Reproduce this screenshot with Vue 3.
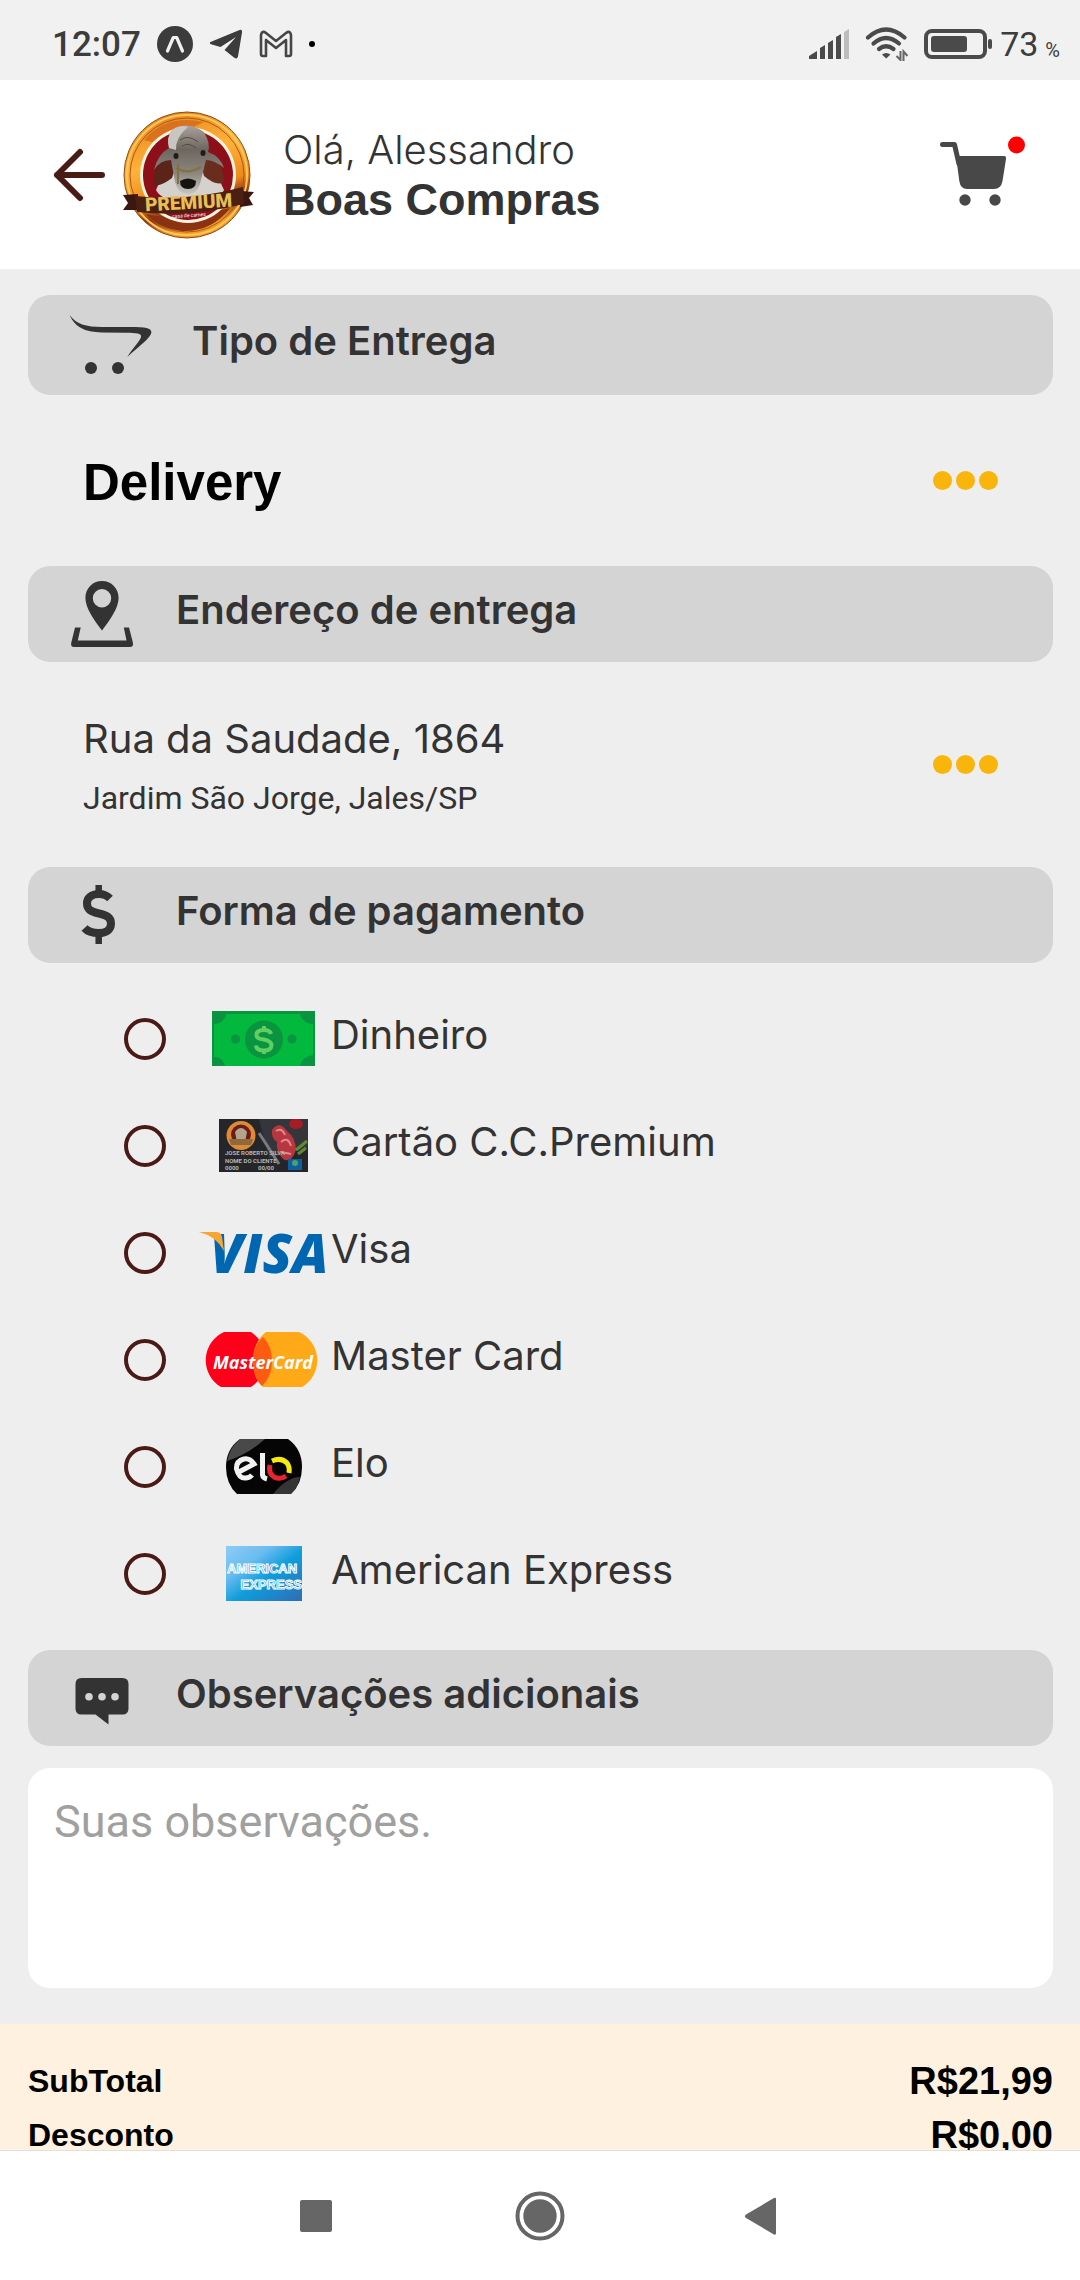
<script setup>
import { ref } from 'vue'

const payment = ref('')
const notes = ref('')

const methods = [
  { id: 'cash', label: 'Dinheiro' },
  { id: 'premium', label: 'Cartão C.C.Premium' },
  { id: 'visa', label: 'Visa' },
  { id: 'master', label: 'Master Card' },
  { id: 'elo', label: 'Elo' },
  { id: 'amex', label: 'American Express' }
]

const totals = [
  { label: 'SubTotal', value: 'R$21,99' },
  { label: 'Desconto', value: 'R$0,00' }
]
</script>

<template>
  <div class="screen">
    <div class="status">
      <div class="status-side">
        <span class="clock">12:07</span>
        <svg width="36" height="36" viewBox="0 0 36 36">
          <circle cx="18" cy="18" r="18" fill="#3c3c3c" />
          <path d="M10.500 25 L16.300 11.500 H19.700 L25.500 25" fill="none" stroke="#f1f1f1" stroke-width="3.200" stroke-linejoin="round" stroke-linecap="round" />
          <path d="M18 15.500 L22.500 26 L18 22 L13.500 26 Z" fill="#3c3c3c" />
        </svg>
        <svg width="34" height="30" viewBox="0 0 34 30">
          <path d="M1.500 13 L30.500 1 Q33.500 0 33 3.500 L29 27.500 Q28 31 25 28.500 L15.500 21 L27 8 L11.500 18 L2 15.200 Q0 14 1.500 13 Z" fill="#3c3c3c" />
        </svg>
        <svg width="34" height="28" viewBox="0 0 34 28">
          <path d="M2 24 V5 Q3 0 7 3 L17 11 L27 3 Q31 0 32 5 V24 Q32 26 30 26 H27 V10 L17 18 L7 10 V26 H4 Q2 26 2 24 Z" fill="none" stroke="#464646" stroke-width="2.600" stroke-linejoin="round" />
        </svg>
        <i class="more-dot"></i>
      </div>
      <div class="status-side status-right">
        <svg width="41" height="30" viewBox="0 0 41 30" fill="#4a4a4a">
          <path d="M0 30 V27 L8 22 V30 Z" />
          <path d="M11 30 V19 L16 16 V30 Z" />
          <path d="M19 30 V14 L24 11 V30 Z" />
          <path d="M27 30 V8 L32 5 V30 Z" />
          <path d="M35 30 V3 L40 0 V30 Z" fill="#bcbcbc" />
        </svg>
        <svg width="44" height="34" viewBox="0 0 44 34">
          <g fill="none" stroke="#4a4a4a" stroke-width="4.200" stroke-linecap="round">
            <path d="M3 10.500 Q21 -5.500 39.500 10.500" />
            <path d="M8.500 16.500 Q21 5.500 34 16.500" />
            <path d="M14 22 Q21 16.500 28.500 22" />
          </g>
          <path d="M17 27.500 Q21 24.500 25.500 27.500 L21.200 31.500 Z" fill="#4a4a4a" />
          <path d="M35.500 24 V33 L31.500 29 M38.500 34 V24.500 L42.500 29" fill="none" stroke="#666" stroke-width="2" />
        </svg>
        <svg width="69" height="32" viewBox="0 0 69 32">
          <rect x="2" y="3" width="59" height="26" rx="6" fill="none" stroke="#4a4a4a" stroke-width="4" />
          <rect x="7" y="8" width="36" height="16" rx="3" fill="#4a4a4a" />
          <rect x="64" y="11" width="4" height="10" rx="2" fill="#4a4a4a" />
        </svg>
        <span class="battery">73</span>
        <span class="percent">%</span>
      </div>
    </div>

    <header class="header">
      <button class="plain" type="button" aria-label="Voltar">
        <svg width="52" height="54" viewBox="0 0 52 54">
          <path d="M4 27 H49 M27 4 L4 27 L27 50" fill="none" stroke="#4a1a17" stroke-width="6" stroke-linecap="round" stroke-linejoin="round" />
        </svg>
      </button>
      <svg class="brand" width="132" height="130" viewBox="0 0 132 130">
        <defs>
          <linearGradient id="ring" x1="0" y1="0" x2="0.300" y2="1">
            <stop offset="0" stop-color="#8a3a10" />
            <stop offset="0.120" stop-color="#e88a22" />
            <stop offset="0.450" stop-color="#ffb23a" />
            <stop offset="0.720" stop-color="#ee8a1e" />
            <stop offset="0.850" stop-color="#8c3410" />
            <stop offset="1" stop-color="#f39a25" />
          </linearGradient>
          <linearGradient id="hide" x1="0" y1="0" x2="0" y2="1">
            <stop offset="0" stop-color="#a8a29c" />
            <stop offset="0.350" stop-color="#6e6760" />
            <stop offset="0.700" stop-color="#8d867e" />
            <stop offset="1" stop-color="#c9c6c2" />
          </linearGradient>
        </defs>
        <circle cx="65" cy="65" r="63" fill="url(#ring)" stroke="#8f4a14" stroke-width="1" />
        <circle cx="65" cy="65" r="60" fill="none" stroke="#ffc65a" stroke-width="2" />
        <circle cx="65" cy="65" r="57" fill="none" stroke="#a85a18" stroke-width="1" />
        <path d="M22 30 Q44 4 82 12 Q58 24 30 32 Z" fill="#d4681c" opacity="0.800" />
        <path d="M24 104 Q54 112 108 98 Q90 122 60 121 Q36 118 24 104 Z" fill="#8a3212" />
        <circle cx="66" cy="65" r="48" fill="#fff3dc" />
        <circle cx="66" cy="65" r="45" fill="#8d0f19" />
        <path d="M34 80 Q40 64 52 58 L82 58 Q96 64 102 80 Q98 92 66 92 Q40 92 34 80 Z" fill="#d5d2ce" />
        <path d="M50 40 Q32 50 31 74 Q37 78 50 68 L56 50 Z" fill="#5c2418" />
        <path d="M84 40 Q102 52 102 72 Q95 77 82 66 L78 50 Z" fill="#6a2c1c" />
        <path d="M50 20 Q66 10 82 22 Q89 34 86 42 Q98 46 102 58 Q92 50 84 50 L79 70 Q76 84 66 84 Q56 84 53 72 L49 50 Q38 50 32 60 Q36 44 47 38 Q44 28 50 20 Z" fill="url(#hide)" />
        <path d="M50 20 Q58 14 66 17 Q53 28 54 40 L47 38 Q44 28 50 20 Z" fill="#c9c5c0" />
        <path d="M58 30 Q66 24 76 32 M60 36 Q67 32 74 38" stroke="#534c46" fill="none" />
        <ellipse cx="54" cy="46" rx="2.500" ry="3" fill="#211b18" />
        <ellipse cx="81" cy="43" rx="2.500" ry="3" fill="#211b18" />
        <path d="M54 58 Q66 65 79 57 M56 54 L56 74" fill="none" stroke="#807246" stroke-width="2.200" />
        <path d="M58 71 Q66 66 74 71 Q74 79 66 79 Q58 79 58 71 Z" fill="#16120f" />
        <path d="M1 85 L16 84 L16 100 L1 100 L6 93 Z" fill="#3a1710" />
        <path d="M119 81 L132 82 L127 88 L131 95 L118 97 Z" fill="#3a1710" />
        <path d="M13 86 Q66 92 121 77 L122 94 Q66 108 15 102 Z" fill="#4b1f12" />
        <text class="brand-name" x="67" y="99" text-anchor="middle" transform="rotate(-3 67 99)">PREMIUM</text>
        <text class="brand-sub" x="67" y="107" text-anchor="middle" transform="rotate(-4 67 107)">casa de carnes</text>
      </svg>
      <div class="greeting">
        <span class="hello">Olá, Alessandro</span>
        <strong class="wish">Boas Compras</strong>
      </div>
      <button class="plain" type="button" aria-label="Carrinho">
        <svg width="88" height="82" viewBox="0 0 88 82">
          <path d="M4.500 10.500 H16.500 L21 30" fill="none" stroke="#484848" stroke-width="5" stroke-linecap="round" stroke-linejoin="round" />
          <path d="M18 22 H66 Q68.500 22 68 25 L64.500 47 Q63 55 56 55 H29 Q22.500 55 21.300 47 Z" fill="#484848" />
          <circle cx="27" cy="66" r="5.700" fill="#484848" />
          <circle cx="57" cy="66" r="5.700" fill="#484848" />
          <circle cx="78.500" cy="11" r="8.500" fill="#f00" />
        </svg>
      </button>
    </header>

    <main class="content">
      <h2 class="bar bar-tall">
        <svg width="84" height="62" viewBox="0 0 84 62" fill="#333">
          <path d="M1.600 1 C8 10 18 13 34 13 L62 13 C78 13 83 14 83.400 18 C83 24 70 33 59.300 43 C64 35 72 27 73 23 C74 19 68 19 58 18.700 L34 18.500 C16 18 7 13 1.600 1 Z" />
          <circle cx="23" cy="54" r="6" />
          <circle cx="50" cy="54" r="6" />
        </svg>
        <span class="bar-title">Tipo de Entrega</span>
      </h2>

      <section class="choice choice-type">
        <span class="delivery">Delivery</span>
        <button class="plain dots" type="button" aria-label="Alterar tipo de entrega"><i></i><i></i><i></i></button>
      </section>

      <h2 class="bar">
        <svg width="68" height="68" viewBox="0 0 68 68" fill="#333">
          <path fill-rule="evenodd" d="M34 1 C43.500 1 50.600 8.500 50.600 18 C50.600 28 42 40 34 50.500 C26 40 17.400 28 17.400 18 C17.400 8.500 24.500 1 34 1 Z M34 9 A9.200 9.200 0 1 0 34 27.400 A9.200 9.200 0 1 0 34 9 Z" />
          <path d="M7 47.500 H12.700 L9.800 60.500 H58.500 L55.800 47.500 H61 L65 63 Q65.500 67 62 67 H6 Q2.500 67 3.200 63 Z" />
        </svg>
        <span class="bar-title">Endereço de entrega</span>
      </h2>

      <section class="choice choice-address">
        <div class="address">
          <span class="street">Rua da Saudade, 1864</span>
          <span class="district">Jardim São Jorge, Jales/SP</span>
        </div>
        <button class="plain dots" type="button" aria-label="Alterar endereço"><i></i><i></i><i></i></button>
      </section>

      <h2 class="bar">
        <svg width="68" height="60" viewBox="0 0 68 60">
          <path d="M42 13.500 C39 10.500 35 9 31 9 C23.500 9 19 13 19 18.500 C19 25 24 27 31 28.500 C38 30 43 32 43 38.500 C43 45 38 48 31 48 C25 48 20 47 16.500 43" fill="none" stroke="#333" stroke-width="8" />
          <path d="M30.700 0 V7 M30.700 51 V59" stroke="#333" stroke-width="6.500" />
        </svg>
        <span class="bar-title">Forma de pagamento</span>
      </h2>

      <div class="methods">
        <label v-for="m in methods" :key="m.id" class="method">
          <input v-model="payment" type="radio" name="payment" :value="m.id" />
          <svg width="130" height="55" viewBox="0 0 130 55">
            <g v-if="m.id === 'cash'">
              <rect x="13" width="103" height="55" fill="#0a9440" />
              <path d="M15 3 H114 V55 H15 Z" fill="#02b83d" />
              <path d="M15 3 H27 Q26 12 15 13 Z M114 3 H101 Q103 12 114 13 Z M15 55 V46 Q24 46 26 55 Z M114 55 V44 Q103 46 101 55 Z" fill="#0a9440" />
              <circle cx="65" cy="28.500" r="19" fill="#0a9440" />
              <circle cx="36.500" cy="28" r="4.500" fill="#0a9440" />
              <circle cx="93" cy="28" r="4.500" fill="#0a9440" />
              <path d="M72 23 Q71 19 65 19 Q57.500 19 57.500 24 Q57.500 28 65 28.500 Q72.500 30 72.500 34.500 Q72 39.500 65 39.500 Q57.500 39.500 57 34.500 M65 15 V19 M65 39 V43" fill="none" stroke="#5fcf62" stroke-width="4" />
            </g>
            <g v-else-if="m.id === 'premium'">
              <rect x="20" y="1" width="89" height="53" fill="#25262a" />
              <path d="M60 1 H109 V30 L70 40 Z" fill="#34363c" />
              <circle cx="42" cy="17.500" r="14.500" fill="#e08a35" />
              <circle cx="42" cy="16.500" r="10" fill="#6b1c1a" />
              <path d="M36 14 Q42 6 48 14 L46 24 H38 Z" fill="#b3a48c" />
              <path d="M30 21 H54 L52 27 H32 Z" fill="#8c6a3c" />
              <ellipse cx="97" cy="6" rx="7" ry="5" fill="#a81d25" />
              <path d="M73 12 Q80 2 88 13 Q97 20 97 32 Q92 46 84 41 Q77 34 78 24 Q72 20 73 12 Z" fill="#b7363f" />
              <path d="M77 13 Q83 9 86 17 M82 24 Q89 18 92 28 M82 34 L92 36" fill="none" stroke="#e08a8c" stroke-width="2" />
              <path d="M60 15 L80 46" stroke="#777a80" stroke-width="3" />
              <path d="M97 32 L108 23 M99 36 L107 30" stroke="#5c8b35" stroke-width="3" />
              <text class="card-line" x="26" y="37">JOSE ROBERTO SILVA</text>
              <text class="card-line" x="26" y="45">NOME DO CLIENTE</text>
              <text class="card-line" x="26" y="52">0000</text>
              <text class="card-line" x="59" y="52">00/00</text>
              <rect x="89" y="41" width="14" height="11" fill="#0d5f9e" />
              <circle cx="96" cy="45" r="3" fill="#4aa36a" />
            </g>
            <g v-else-if="m.id === 'visa'">
              <text class="visa" x="11" y="48">VISA</text>
              <path d="M0 7 H17 Q22 7 23 12 L25 26 Q17 11 0 7 Z" fill="#f9a533" />
            </g>
            <g v-else-if="m.id === 'master'">
              <path d="M30 0 H52 A33 33 0 0 1 52 55 H22 A31 31 0 0 1 25 0 Z" fill="#fe0019" />
              <path d="M67 0 H100 A31 31 0 0 1 103 55 H64 Q54 46 54 29 Q54 10 67 0 Z" fill="#ffa919" />
              <path d="M64 5 Q73 14 73 29 Q73 45 63 54 Q54 46 54 29 Q54 14 64 5 Z" fill="#fd5a12" />
              <text class="master" x="64" y="37" text-anchor="middle">MasterCard</text>
            </g>
            <g v-else-if="m.id === 'elo'">
              <path d="M41 0 H89 Q103 10 103 28 Q103 45 92 55 H38 Q27 45 27 28 Q27 10 41 0 Z" fill="#050505" />
              <path d="M41 0 H66 Q48 16 28 22 Q31 8 41 0 Z" fill="#777" opacity="0.600" />
              <path d="M74 55 Q88 38 101 38 Q98 50 92 55 Z" fill="#666" opacity="0.500" />
              <g fill="none" stroke-width="5">
                <path d="M38 34 L55 25 Q51 19 45 20 Q37 22 37.500 30 Q40 40 47 39 Q51 38.500 53 36" stroke="#f1f1f1" />
                <path d="M63.500 14 V36 Q64 39 68 40" stroke="#f1f1f1" />
                <path d="M71 26 Q69 34 75 38 Q81 41 87 37" stroke="#e8242c" />
                <path d="M73 22 Q82 18 88 24 Q91 28 90 34" stroke="#f5ea14" />
              </g>
            </g>
            <g v-else>
              <defs>
                <linearGradient id="blue" x1="0" y1="0" x2="1" y2="1">
                  <stop offset="0" stop-color="#8fcdf5" />
                  <stop offset="0.300" stop-color="#6abcf0" />
                  <stop offset="0.550" stop-color="#0f9ddb" />
                  <stop offset="1" stop-color="#2f6db5" />
                </linearGradient>
              </defs>
              <rect x="27" width="76" height="55" fill="url(#blue)" />
              <text class="amex" x="28" y="27">AMERICAN</text>
              <text class="amex" x="103" y="43" text-anchor="end">EXPRESS</text>
            </g>
          </svg>
          <span class="method-name">{{ m.label }}</span>
        </label>
      </div>

      <h2 class="bar">
        <svg width="68" height="54" viewBox="0 0 68 54">
          <path d="M13.500 7 H54.500 Q60.500 7 60.500 13 V37.500 Q60.500 43.500 54.500 43.500 H40.500 V53.500 L27.500 43.500 H13.500 Q7.500 43.500 7.500 37.500 V13 Q7.500 7 13.500 7 Z" fill="#333" />
          <g fill="#d4d4d4">
            <circle cx="21" cy="25.700" r="3.800" />
            <circle cx="34" cy="25.700" r="3.800" />
            <circle cx="47" cy="25.700" r="3.800" />
          </g>
        </svg>
        <label class="bar-title" for="notes">Observações adicionais</label>
      </h2>

      <textarea id="notes" v-model="notes" class="notes" placeholder="Suas observações."></textarea>

      <dl class="totals">
        <div v-for="t in totals" :key="t.label" class="total">
          <dt>{{ t.label }}</dt>
          <dd>{{ t.value }}</dd>
        </div>
      </dl>
    </main>

    <nav class="nav">
      <button class="plain" type="button" aria-label="Recentes">
        <svg width="50" height="50" viewBox="0 0 50 50"><rect x="10" y="9" width="32" height="32" rx="2" fill="#666" /></svg>
      </button>
      <button class="plain" type="button" aria-label="Início">
        <svg width="50" height="50" viewBox="0 0 50 50">
          <circle cx="25" cy="25" r="22.500" fill="none" stroke="#666" stroke-width="4" />
          <circle cx="25" cy="25" r="16.700" fill="#666" />
        </svg>
      </button>
      <button class="plain" type="button" aria-label="Voltar ao anterior">
        <svg width="50" height="50" viewBox="0 0 50 50"><path d="M6 23.500 L34 7 Q36 6 36 8 V42 Q36 44.500 34 43.500 L6 27 Q4 25 6 23.500 Z" fill="#666" /></svg>
      </button>
    </nav>
  </div>
</template>

<style>
body {
  margin: 0;
}
</style>

<style scoped>
.screen {
  display: flex;
  flex-direction: column;
  height: 100vh;
  overflow: hidden;
  background: #eee;
  color: #333;
  font-family: Inter, "Liberation Sans", sans-serif;
}

svg {
  display: block;
  flex: none;
}

.plain {
  display: flex;
  flex: none;
  padding: 0;
  border: 0;
  background: none;
  color: inherit;
}

.status {
  display: flex;
  flex: none;
  align-items: center;
  justify-content: space-between;
  box-sizing: border-box;
  height: 80px;
  padding: 8px 20px 0 52px;
  background: #f1f1f1;
  font-family: Roboto, sans-serif;
  color: #3c3c3c;
}

.status-side {
  display: flex;
  align-items: center;
  gap: 16px;
}

.status-right {
  gap: 15px;
}

.clock {
  font-size: 35px;
  font-weight: 500;
}

.more-dot {
  width: 6px;
  height: 6px;
  border-radius: 50%;
  background: #000;
}

.battery {
  margin-left: -8px;
  font-size: 34px;
}

.percent {
  margin-left: -8px;
  padding-top: 12px;
  font-size: 20px;
}

.header {
  display: flex;
  flex: none;
  align-items: center;
  box-sizing: border-box;
  height: 189px;
  padding: 0 54px 0 53px;
  background: #fff;
}

.brand {
  margin: 0 29px 0 17px;
}

.brand-name {
  font: 900 19px Roboto, sans-serif;
  fill: #e8bf55;
}

.brand-sub {
  font: 5px Roboto, sans-serif;
  fill: #fff;
}

.greeting {
  display: flex;
  flex: 1;
  flex-direction: column;
}

.hello {
  font-size: 40px;
  font-weight: 300;
  line-height: 50px;
}

.wish {
  font-family: "Liberation Sans", sans-serif;
  font-size: 45px;
  line-height: 50px;
}

.content {
  flex: 1;
  min-height: 0;
  padding-top: 26px;
  overflow: hidden;
}

.bar {
  display: flex;
  align-items: center;
  gap: 40px;
  box-sizing: border-box;
  height: 96px;
  margin: 0 27px 0 28px;
  padding-left: 40px;
  border-radius: 22px;
  background: #d4d4d4;
  font-size: 40px;
  font-weight: 600;
}

.bar-tall {
  height: 100px;
}

.bar-title {
  padding-bottom: 10px;
}

.choice {
  display: flex;
  align-items: center;
  justify-content: space-between;
  padding: 0 82px 0 83px;
}

.choice-type {
  height: 171px;
}

.choice-address {
  height: 205px;
}

.delivery {
  padding-top: 4px;
  font: 700 51px "Liberation Sans", sans-serif;
  color: #000;
}

.dots {
  gap: 4px;
}

.dots i {
  width: 19px;
  height: 19px;
  border-radius: 50%;
  background: #f9b50b;
}

.address {
  display: flex;
  flex-direction: column;
}

.street {
  font-size: 40px;
  line-height: 66px;
}

.district {
  font-family: Roboto, sans-serif;
  font-size: 32px;
  line-height: 52px;
}

.methods {
  padding: 22px 0 23px 124px;
}

.method {
  display: flex;
  align-items: center;
  height: 107px;
}

.method input {
  appearance: none;
  flex: none;
  box-sizing: border-box;
  width: 42px;
  height: 42px;
  margin: 0 33px 0 0;
  border: 4px solid #4a1a17;
  border-radius: 50%;
}

.method input:checked {
  background: radial-gradient(#4a1a17 45%, transparent 50%);
}

.method svg {
  overflow: visible;
}

.method-name {
  margin-left: 2px;
  padding-bottom: 8px;
  font-size: 40px;
}

.card-line {
  font: 700 6px Roboto, sans-serif;
  fill: #b4b4b4;
}

.visa {
  font: italic 800 54px "Open Sans", sans-serif;
  fill: #0066b2;
}

.master {
  font: italic 700 18px "Open Sans", sans-serif;
  fill: #fff;
}

.amex {
  font: 700 13px "Liberation Sans", sans-serif;
  fill: #3aa3e0;
  stroke: #fff;
  stroke-width: 1px;
}

.notes {
  display: block;
  box-sizing: border-box;
  width: calc(100% - 55px);
  height: 220px;
  margin: 22px 27px 36px 28px;
  padding: 28px 26px;
  border: 0;
  border-radius: 22px;
  outline: 0;
  resize: none;
  background: #fff;
  color: #333;
  font: 45px/52px Roboto, sans-serif;
}

.notes::placeholder {
  color: #a0a0a0;
}

.totals {
  margin: 0;
  padding: 30px 27px 30px 28px;
  background: #fff1df;
  color: #000;
  font-family: "Liberation Sans", sans-serif;
  font-weight: 700;
}

.total {
  display: flex;
  align-items: center;
  justify-content: space-between;
  height: 54px;
}

.total dt {
  font-size: 32px;
}

.total dd {
  margin: 0;
  font-size: 38px;
}

.nav {
  display: flex;
  flex: none;
  align-items: center;
  justify-content: center;
  gap: 175px;
  box-sizing: border-box;
  height: 130px;
  border-top: 1px solid #e0e0e0;
  background: #fff;
}
</style>
